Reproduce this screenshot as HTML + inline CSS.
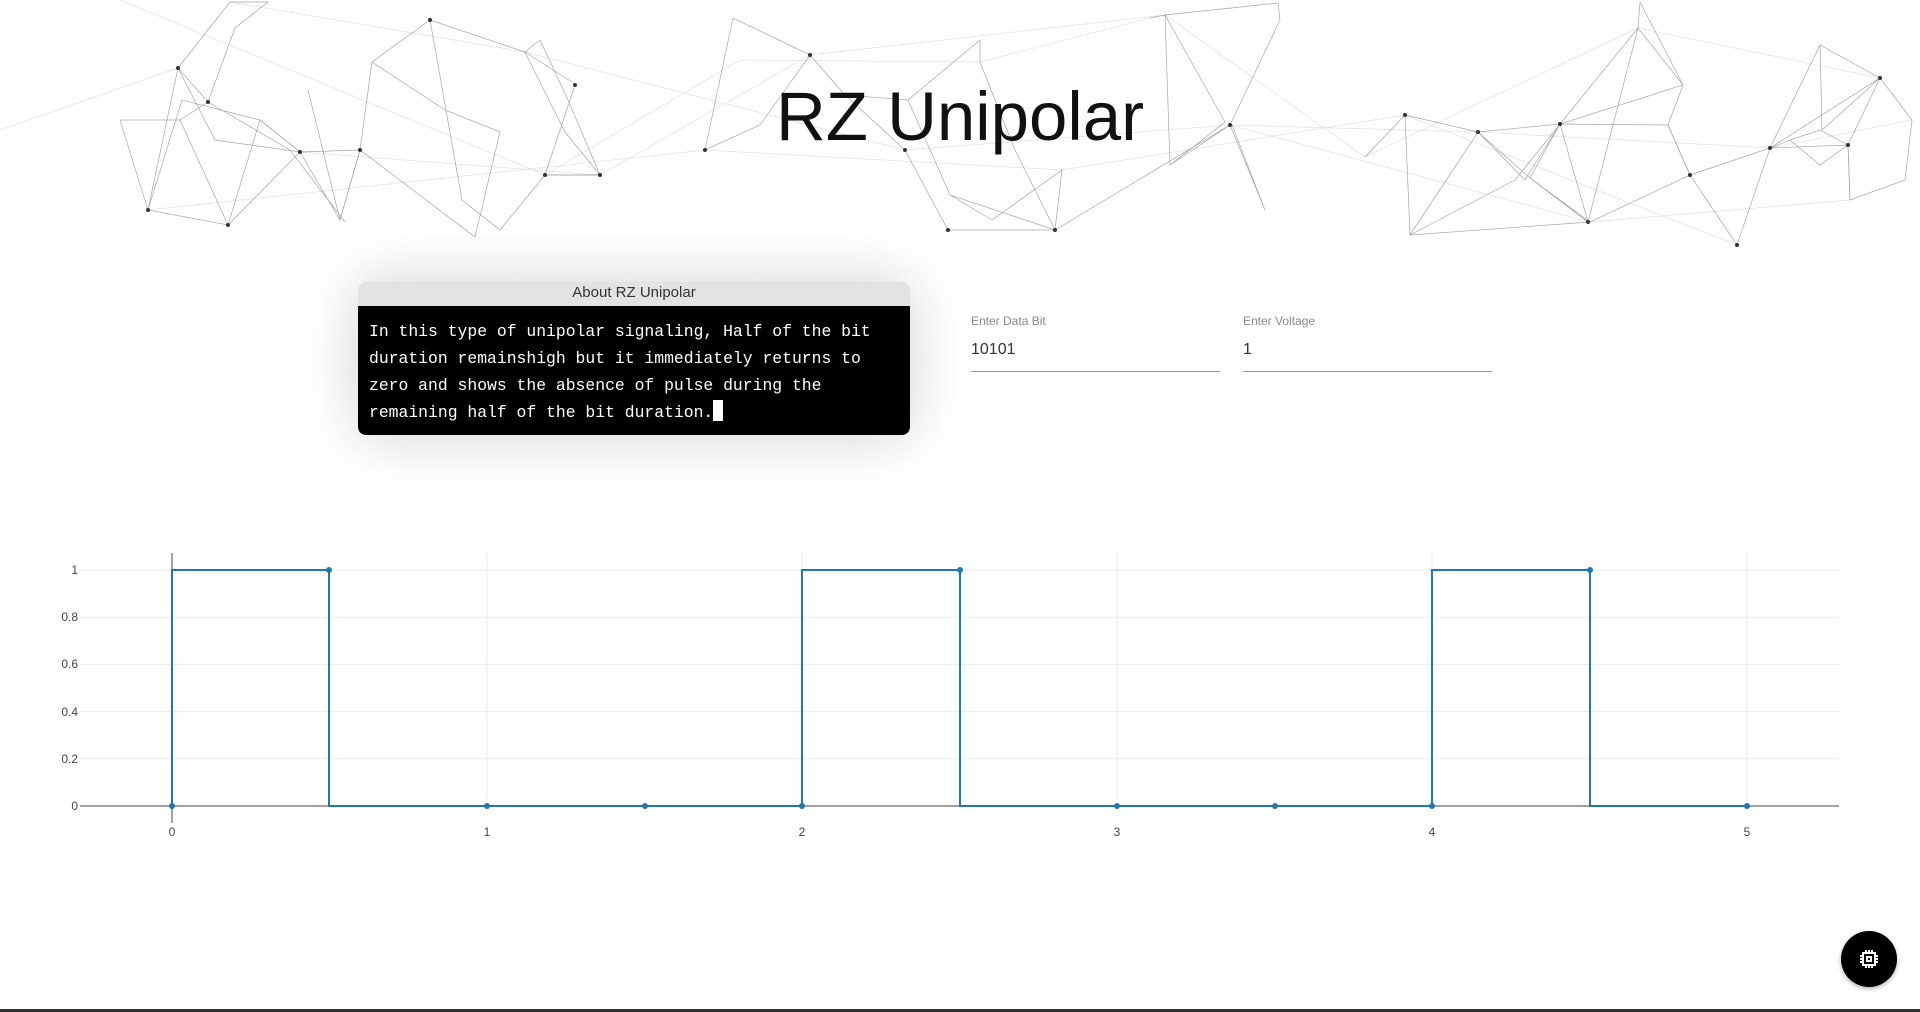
<!DOCTYPE html>
<html><head><meta charset="utf-8"><style>
html,body{margin:0;padding:0;background:#fff;width:1920px;height:1012px;overflow:hidden;font-family:"Liberation Sans",sans-serif}
.t{position:absolute;left:0;width:1920px;text-align:center;top:72px;font-size:69px;color:#111;line-height:90px}
.card{position:absolute;left:358px;top:282px;width:552px;height:153px;border-radius:8px;box-shadow:0 0 60px rgba(0,0,0,.18)}
.hd{height:24px;background:#e3e3e3;border-radius:8px 8px 0 0;text-align:center;font-size:15px;line-height:22px;color:#333}
.bd{height:129px;background:#000;border-radius:0 0 8px 8px;color:#fff;font-family:"Liberation Mono",monospace;font-size:16.4px;line-height:27px;padding:12px 11px 0;box-sizing:border-box;white-space:pre}
.cur{display:inline-block;width:10px;height:21px;background:#fff;vertical-align:-4px}
.fld{position:absolute;top:314px;width:249px;border-bottom:1.5px solid #999;height:57px}
.fld .l{font-size:12px;color:#888;margin-top:0}
.fld .v{font-size:16px;color:#333;margin-top:13px}
.fab{position:absolute;left:1841px;top:931px;width:56px;height:56px;border-radius:50%;background:#000;box-shadow:0 2px 5px rgba(0,0,0,.3)}
.bot{position:absolute;left:0;top:1009px;width:1920px;height:3px;background:#333}
</style></head><body>
<svg width="1920" height="250" style="position:absolute;left:0;top:0" stroke="#000" stroke-width="0.7" fill="none">
<g opacity="0.35">
<path d="M178 68L230 2L268 2L235 28L208 102L178 68L148 210L228 225L260 120L300 152L340 220L360 150L372 62L430 20L462 200L500 230L545 175L600 175L565 132L525 52L430 20L372 62L445 110L500 132L475 237L360 150L300 152L228 225L180 120L208 102L290 150L345 222"/>
<path d="M178 68L215 140L300 152L260 120L182 100L148 210L120 120L180 120M360 150L340 220L308 90M575 85L545 175L600 175L568 100L540 40L525 52L572 82"/>
<path d="M705 150L733 18L810 55L845 95L905 150L948 230L1055 230L1015 150L980 62L980 40L908 100L950 195L992 220L1062 170L1055 230L950 195L908 100L845 95L810 55L733 18L705 150L760 125L810 55"/>
<path d="M1150 18L1165 15L1225 122L1170 165L1165 15L1278 3L1280 20L1230 125L1265 210L1232 125M1055 230L1230 125L1170 165"/>
<path d="M1365 157L1405 115L1478 132L1560 124L1530 178L1588 222L1638 28L1640 2L1683 85L1668 125L1690 175L1737 245L1770 148L1820 45L1880 78L1912 120L1905 180L1850 200L1848 145L1770 148L1690 175L1590 222L1530 178L1478 132L1405 115"/>
<path d="M1405 115L1410 235L1478 132L1525 180L1560 124L1668 125L1690 175M1560 124L1588 222L1530 178M1560 124L1638 28L1683 85L1560 124L1515 180L1410 235L1590 222M1790 140L1820 130L1848 145L1820 165L1790 140L1770 148L1880 78L1848 145L1850 200M1820 45L1822 130L1880 78"/>
</g>
<g opacity="0.12">
<path d="M120 0L545 175L740 60L980 62L1150 18M230 2L525 52L905 150L1230 125L1478 132L1770 148L1912 120M148 210L705 150L1062 170L1405 115L1737 245M300 152L600 175L810 55L1165 15L1365 157L1638 28L1880 78M0 130L178 68M1230 125L1590 222L1850 200"/>
</g>
<g fill="#333" stroke="none">
<circle cx="178" cy="68" r="2"/><circle cx="208" cy="102" r="2"/><circle cx="148" cy="210" r="2"/><circle cx="228" cy="225" r="2"/><circle cx="300" cy="152" r="2"/><circle cx="360" cy="150" r="2"/><circle cx="430" cy="20" r="2"/><circle cx="545" cy="175" r="2"/><circle cx="600" cy="175" r="2"/><circle cx="575" cy="85" r="2"/><circle cx="705" cy="150" r="2"/><circle cx="810" cy="55" r="2"/><circle cx="905" cy="150" r="2"/><circle cx="948" cy="230" r="2"/><circle cx="1055" cy="230" r="2"/><circle cx="1230" cy="125" r="2"/><circle cx="1405" cy="115" r="2"/><circle cx="1478" cy="132" r="2"/><circle cx="1560" cy="124" r="2"/><circle cx="1690" cy="175" r="2"/><circle cx="1770" cy="148" r="2"/><circle cx="1848" cy="145" r="2"/><circle cx="1880" cy="78" r="2"/><circle cx="1737" cy="245" r="2"/><circle cx="1588" cy="222" r="2"/></g>
</svg>
<div class="t">RZ Unipolar</div>
<div class="card"><div class="hd">About RZ Unipolar</div><div class="bd">In this type of unipolar signaling, Half of the bit
duration remainshigh but it immediately returns to
zero and shows the absence of pulse during the
remaining half of the bit duration.<span class="cur"></span></div></div>
<div class="fld" style="left:971px"><div class="l">Enter Data Bit</div><div class="v">10101</div></div>
<div class="fld" style="left:1243px"><div class="l">Enter Voltage</div><div class="v">1</div></div>
<svg width="1920" height="300" style="position:absolute;left:0;top:540px" font-family="Liberation Sans,sans-serif" font-size="12" fill="#444">
<g stroke="#ebebeb" stroke-width="1">
<path d="M80 30H1839M80 77.2H1839M80 124.4H1839M80 171.6H1839M80 218.8H1839"/>
<path d="M487 13V266M802 13V266M1117 13V266M1432 13V266M1747 13V266"/>
</g>
<path d="M80 266H1839M172 13V283" stroke="#444" stroke-width="1"/>
<g text-anchor="end"><text x="78" y="34">1</text><text x="78" y="81">0.8</text><text x="78" y="128">0.6</text><text x="78" y="176">0.4</text><text x="78" y="223">0.2</text><text x="78" y="270">0</text></g>
<g text-anchor="middle"><text x="172" y="296">0</text><text x="487" y="296">1</text><text x="802" y="296">2</text><text x="1117" y="296">3</text><text x="1432" y="296">4</text><text x="1747" y="296">5</text></g>
<path d="M172 266V30H329V266H802V30H960V266H1432V30H1590V266H1747" stroke="#1f77b4" stroke-width="2" fill="none"/>
<g fill="#1f77b4"><circle cx="172" cy="266" r="3"/><circle cx="329" cy="30" r="3"/><circle cx="487" cy="266" r="3"/><circle cx="645" cy="266" r="3"/><circle cx="802" cy="266" r="3"/><circle cx="960" cy="30" r="3"/><circle cx="1117" cy="266" r="3"/><circle cx="1275" cy="266" r="3"/><circle cx="1432" cy="266" r="3"/><circle cx="1590" cy="30" r="3"/><circle cx="1747" cy="266" r="3"/></g>
</svg>
<div class="fab"><svg width="56" height="56" viewBox="0 0 56 56"><g fill="none" stroke="#fff" stroke-width="2"><rect x="22" y="22" width="12" height="12"/><rect x="26" y="26" width="4" height="4"/><path d="M25 19v3M28 19v3M31 19v3M25 34v3M28 34v3M31 34v3M19 25h3M19 28h3M19 31h3M34 25h3M34 28h3M34 31h3"/></g></svg></div>
<div class="bot"></div>
</body></html>
